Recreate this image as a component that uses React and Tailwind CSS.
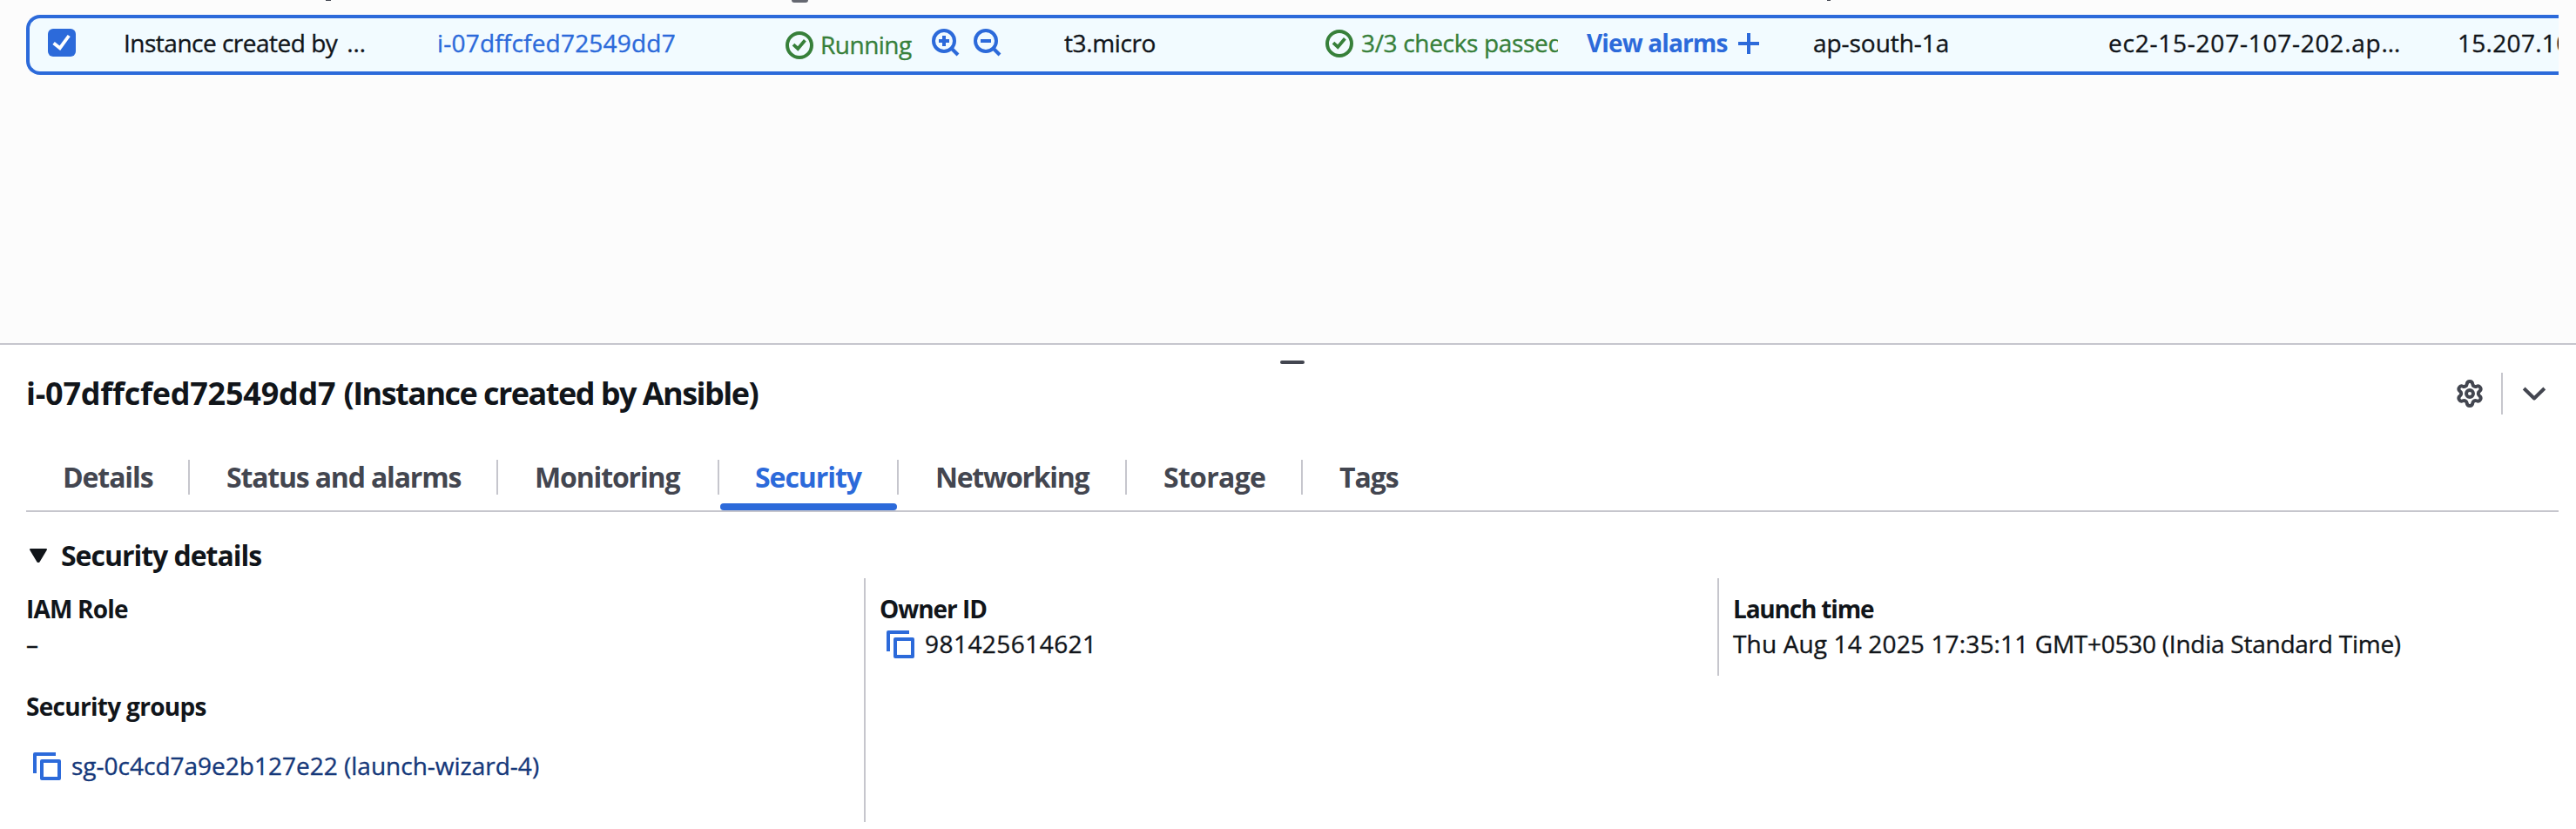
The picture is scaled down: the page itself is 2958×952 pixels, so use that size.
function StatusPositive({ className = "" }) {
  return (
    <svg viewBox="0 0 16 16" className={`size-8 shrink-0 ${className}`} fill="none" stroke="currentColor">
      <circle cx="8" cy="8" r="7" strokeWidth="2" />
      <path d="M4.5 7.6 7.1 10 11.2 5.1" strokeWidth="1.9" />
    </svg>
  );
}

function Zoom({ plus, className = "" }) {
  return (
    <svg viewBox="0 0 16 16" className={`size-8 shrink-0 ${className}`} fill="none" stroke="currentColor" strokeWidth="2">
      <circle cx="7" cy="7" r="6" />
      <path d="M11 11 15 15" />
      <path d={plus ? "M4 7h6M7 4v6" : "M4 7h6"} />
    </svg>
  );
}

function CopyIcon() {
  return (
    <svg viewBox="0 0 16 16" className="mt-[5px] ml-2 size-8 shrink-0 text-[#2c6ada]" fill="none" stroke="currentColor" strokeWidth="2" strokeLinejoin="round">
      <path d="M1 12V1h12" />
      <path d="M5 5h10v10H5z" />
    </svg>
  );
}

function SelectedRow() {
  return (
    <div className="ml-[30px] mr-5 flex h-[69px] items-start overflow-hidden whitespace-nowrap rounded-l-[16px] border-4 border-r-0 border-[#2c6ada] bg-[#f2fbff] pt-2 text-[28px] leading-10 text-[#11151a] [-webkit-text-stroke:0.35px_currentColor]">
      <div className="w-[108px] shrink-0 pl-[21px] pt-1">
        <div className="size-8 rounded-[6px] bg-[#2c6ada] text-white">
          <svg viewBox="0 0 16 16" className="size-8" fill="none" stroke="currentColor" strokeWidth="1.9">
            <path d="M3.3 8.2 6.9 11.1 12.1 4" />
          </svg>
        </div>
      </div>
      <div className="w-[360px] shrink-0 tracking-[-0.5px]">
        Instance created by <span className="ml-1 tracking-normal">…</span>
      </div>
      <div className="w-[400px] shrink-0 tracking-[0.2px] text-[#2c6ada]">i-07dffcfed72549dd7</div>
      <div className="flex w-[320px] shrink-0 items-start text-[#2c6ada]">
        <StatusPositive className="mt-[7px] text-[#37803a]" />
        <span className="ml-2 mt-0.5 w-[128px] shrink-0 tracking-[-0.5px] text-[#37803a]">Running</span>
        <Zoom plus className="mt-1" />
        <Zoom className="ml-4 mt-1" />
      </div>
      <div className="w-[300px] shrink-0 tracking-[-0.38px]">t3.micro</div>
      <div className="mr-[33px] flex w-[267px] shrink-0 items-start overflow-hidden text-[#37803a]">
        <StatusPositive className="mt-[5px]" />
        <span className="ml-[9px] tracking-[-0.33px]">3/3 checks passed</span>
      </div>
      <div className="flex w-[260px] shrink-0 items-start text-[#2c6ada]">
        <span className="w-[174px] font-bold tracking-[-0.87px] [-webkit-text-stroke:0]">View alarms</span>
        <svg viewBox="0 0 24 24" className="mt-[9px] size-6" fill="none" stroke="currentColor" strokeWidth="4">
          <path d="M0 12h24M12 0v24" />
        </svg>
      </div>
      <div className="w-[339px] shrink-0 tracking-[-0.05px]">ap-south-1a</div>
      <div className="w-[401px] shrink-0 tracking-[0.77px]">ec2-15-207-107-202.ap…</div>
      <div className="shrink-0 tracking-[0.3px]">15.207.107.202</div>
    </div>
  );
}

function TabSeparator() {
  return <span className="h-10 w-0.5 shrink-0 bg-[#c6c6cd]" />;
}

function Tabs() {
  return (
    <div className="ml-[30px] mr-5 flex h-[60px] items-start whitespace-nowrap border-b-2 border-[#c6c6cd] text-[32px] font-bold leading-10 text-[#434650]">
      <div className="w-[186px] pl-[42px] tracking-[-1.11px]">Details</div>
      <TabSeparator />
      <div className="w-[352px] pl-[42px] tracking-[-1.18px]">Status and alarms</div>
      <TabSeparator />
      <div className="w-[252px] pl-[42px] tracking-[-1.15px]">Monitoring</div>
      <TabSeparator />
      <div className="w-[204px] text-[#2c6ada]">
        <div className="pl-[41px] tracking-[-1.05px]">Security</div>
        <div className="ml-px mt-2.5 h-2 rounded-[4px] bg-[#2c6ada]" />
      </div>
      <TabSeparator />
      <div className="w-[260px] pl-[42px] tracking-[-1.3px]">Networking</div>
      <TabSeparator />
      <div className="w-[200px] pl-[42px] tracking-[-0.7px]">Storage</div>
      <TabSeparator />
      <div className="pl-[42px] tracking-[-1.05px]">Tags</div>
    </div>
  );
}

export default function App() {
  return (
    <div className="h-[952px] w-full overflow-hidden bg-white font-['Open_Sans','Noto_Sans',sans-serif]">
      <div className="h-[394px] bg-[#fcfcfc]">
        <div className="flex h-[17px] items-start">
          <span className="ml-[374px] h-px w-1.5 bg-[#434650]" />
          <span className="ml-[529px] h-[3px] w-[19px] rounded-b-[10px] bg-[#656871]" />
          <span className="ml-[1170px] h-px w-1 bg-[#434650]" />
        </div>
        <SelectedRow />
      </div>

      <div className="border-t-2 border-[#c6c6cd] pt-[18px]">
        <div className="ml-[1470px] h-1 w-7 rounded-[2px] bg-[#434650]" />

        <div className="mt-[9px] flex h-[49px] items-start justify-between pl-[30px] pr-8 text-[#434650]">
          <h2 className="whitespace-nowrap pt-px text-[36px] font-bold leading-[48px] tracking-[-1.53px] text-[#11151a]">
            <span className="tracking-[-0.24px]">i-07dffcfed72549dd7 </span>(Instance created by Ansible)
          </h2>
          <div className="flex items-start">
            <svg viewBox="0.57 0.57 22.86 22.86" className="mt-[9px] size-8" fill="none" stroke="currentColor" strokeWidth="2.8" strokeLinejoin="round">
              <path d="M9.671 4.136a2.34 2.34 0 0 1 4.659 0 2.34 2.34 0 0 0 3.319 1.915 2.34 2.34 0 0 1 2.33 4.033 2.34 2.34 0 0 0 0 3.831 2.34 2.34 0 0 1-2.33 4.033 2.34 2.34 0 0 0-3.319 1.915 2.34 2.34 0 0 1-4.659 0 2.34 2.34 0 0 0-3.32-1.915 2.34 2.34 0 0 1-2.33-4.033 2.34 2.34 0 0 0 0-3.831A2.34 2.34 0 0 1 6.35 6.051a2.34 2.34 0 0 0 3.319-1.915" />
              <circle cx="12" cy="12" r="2.86" />
            </svg>
            <span className="ml-5 mt-px h-12 w-0.5 bg-[#c6c6cd]" />
            <svg viewBox="0 0 32 32" className="ml-5 mt-[9px] size-8" fill="none" stroke="currentColor" strokeWidth="4" strokeLinejoin="round">
              <path d="M4.2 10 16 21.5 27.8 10" />
            </svg>
          </div>
        </div>

        <div className="mt-[52px]">
          <Tabs />
        </div>

        <div className="mt-[30px] flex items-start pl-[34px]">
          <svg viewBox="0 0 20 16" className="mt-3 h-4 w-5 text-[#11151a]" fill="currentColor" stroke="currentColor" strokeWidth="2" strokeLinejoin="round">
            <path d="M1 1h18L10.6 15H9.4z" />
          </svg>
          <h3 className="ml-4 text-[32px] font-bold leading-10 tracking-[-1.03px] text-[#11151a]">Security details</h3>
        </div>

        <div className="mt-1.5 flex items-start whitespace-nowrap pl-[30px] text-[28px] leading-10 text-[#11151a]">
          <div className="w-[962px] shrink-0 pt-[15px]">
            <div className="font-bold tracking-[-0.8px]">IAM Role</div>
            <div className="[-webkit-text-stroke:0.35px_currentColor]">–</div>
            <div className="mt-8 font-bold tracking-[-0.7px]">Security groups</div>
            <div className="mt-7 flex items-start">
              <CopyIcon />
              <span className="ml-3 text-[#15387a] [-webkit-text-stroke:0.35px_currentColor]">sg-0c4cd7a9e2b127e22 (launch-wizard-4)</span>
            </div>
          </div>
          <div className="h-[280px] w-[980px] shrink-0 border-l-2 border-[#c6c6cd] pl-4 pt-[15px]">
            <div className="font-bold tracking-[-1.02px]">Owner ID</div>
            <div className="flex items-start">
              <CopyIcon />
              <span className="ml-3 tracking-[0.45px] [-webkit-text-stroke:0.35px_currentColor]">981425614621</span>
            </div>
          </div>
          <div className="h-[112px] border-l-2 border-[#c6c6cd] pl-4 pt-[15px]">
            <div className="font-bold tracking-[-1.18px]">Launch time</div>
            <div className="tracking-[-0.25px] [-webkit-text-stroke:0.35px_currentColor]">
              <span className="tracking-[0.15px]">Thu Aug 14 2025 17:35:11 </span>GMT+0530 (India Standard Time)
            </div>
          </div>
        </div>
      </div>
    </div>
  );
}
